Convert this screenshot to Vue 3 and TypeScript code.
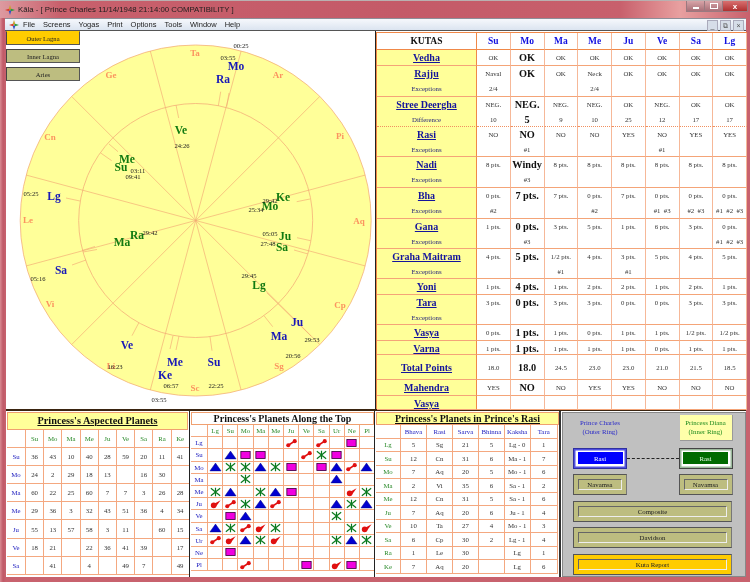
<script setup lang="ts">
const menus = ['File', 'Screens', 'Yogas', 'Print', 'Options', 'Tools', 'Window', 'Help']

const cx = 195.7
const cy = 220.5
const spokes = Array.from({ length: 12 }, (_, i) => {
  const a = ((15 + 30 * i) * Math.PI) / 180
  return { x: cx + 175.5 * Math.sin(a), y: cy - 175.5 * Math.cos(a) }
})

const signs = [
  ['Ta', 195, 53], ['Ar', 278, 75], ['Pi', 340, 136], ['Aq', 359, 221], ['Cp', 340, 305], ['Sg', 279, 366],
  ['Sc', 195, 388], ['Li', 111, 366], ['Vi', 50, 304], ['Le', 28, 220], ['Cn', 50, 137], ['Ge', 111, 75],
] as const

const outerPlanets = [
  ['Mo', 236, 66], ['Ra', 223, 79], ['Lg', 54, 196], ['Sa', 61, 270], ['Ve', 127, 345],
  ['Me', 175, 362], ['Ke', 165, 375], ['Su', 214, 362], ['Ma', 279, 336], ['Ju', 297, 322],
] as const

const innerPlanets = [
  ['Ve', 181, 130], ['Me', 127, 159], ['Su', 121, 167], ['Ke', 283, 197], ['Mo', 270, 206],
  ['Ju', 285, 236], ['Sa', 282, 247], ['Ra', 137, 235], ['Ma', 122, 242], ['Lg', 259, 285],
] as const

const times = [
  ['00:25', 241, 45], ['03:55', 228, 57], ['24:26', 182, 145], ['03:11', 138, 170], ['09:41', 133, 176],
  ['05:25', 31, 193], ['29:42', 150, 232], ['29:42', 270, 200], ['25:34', 256, 209], ['05:05', 270, 233],
  ['27:48', 268, 243], ['29:45', 249, 275], ['05:16', 38, 278], ['29:53', 312, 339], ['20:56', 293, 355],
  ['16:23', 115, 366], ['06:57', 171, 385], ['22:25', 216, 385], ['03:55', 159, 399],
] as const

const ticks = [
  [220.7, 91.7, 218.3, 106], [229, 93, 226.7, 106.7], [176, 105, 178.7, 118], [109, 144, 118, 151.7],
  [100.7, 153, 111.7, 160.7], [66, 198, 80, 201], [296.7, 201.7, 310, 199], [297, 237.7, 310.7, 240.7],
  [294, 250, 308, 254], [82, 250.5, 95, 246.5], [83, 252, 97, 249.5], [72, 265, 86, 260],
  [132, 335.7, 138.7, 323], [170, 349, 173, 335.7], [176, 350, 179, 336], [212, 350.7, 210, 336.7],
  [272.7, 326.7, 264, 315.7], [266.7, 292.7, 311, 336],
]

const kutaHeads = ['Su', 'Mo', 'Ma', 'Me', 'Ju', 'Ve', 'Sa', 'Lg']

interface KutaRow {
  name: string
  sub?: string
  h: number
  cells: string[]
  center?: boolean
  dotted?: boolean
}

const pts = (v: string) =>
  v.split(',').map((s) => {
    const [a, b] = s.split('/')
    return (a ? a + ' pts.' : '') + (b ? '|' + b.replace(/_/g, '  ') : '')
  })

const kutas: KutaRow[] = [
  { name: 'Vedha', h: 16, cells: Array(8).fill('OK') },
  { name: 'Rajju', sub: 'Exceptions', h: 30.5, cells: ['Naval|2/4', 'OK', 'OK', 'Neck|2/4', 'OK', 'OK', 'OK', 'OK'] },
  { name: 'Stree Deergha', sub: 'Difference', h: 30.5, dotted: true, cells: ['NEG.|10', 'NEG.|5', 'NEG.|9', 'NEG.|10', 'OK|25', 'NEG.|12', 'OK|17', 'OK|17'] },
  { name: 'Rasi', sub: 'Exceptions', h: 30, cells: ['NO', 'NO|#1', 'NO', 'NO', 'YES', 'NO|#1', 'YES', 'YES'] },
  { name: 'Nadi', sub: 'Exceptions', h: 30.5, cells: ['8 pts.', 'Windy|#3', '8 pts.', '8 pts.', '8 pts.', '8 pts.', '8 pts.', '8 pts.'] },
  { name: 'Bha', sub: 'Exceptions', h: 31, cells: pts('0/#2,7,7,0/#2,7,0/#1_#3,0/#2_#3,0/#1_#2_#3') },
  { name: 'Gana', sub: 'Exceptions', h: 30.5, cells: pts('1,0/#3,3,5,1,6,3,0/#1_#2_#3') },
  { name: 'Graha Maitram', sub: 'Exceptions', h: 30, cells: ['4 pts.', '5 pts.', '1/2 pts.|#1', '4 pts.', '3 pts.|#1', '5 pts.', '4 pts.', '5 pts.'] },
  { name: 'Yoni', h: 15.5, cells: pts('1,4,1,2,2,1,2,1') },
  { name: 'Tara', sub: 'Exceptions', h: 30.5, cells: pts('3,0,3,3,0,0,3,3') },
  { name: 'Vasya', h: 15.5, cells: ['0 pts.', '1 pts.', '1 pts.', '0 pts.', '1 pts.', '1 pts.', '1/2 pts.', '1/2 pts.'] },
  { name: 'Varna', h: 14.5, cells: pts('1,1,1,1,1,0,1,1') },
  { name: 'Total Points', h: 25, center: true, cells: ['18.0', '18.0', '24.5', '23.0', '23.0', '21.0', '21.5', '18.5'] },
  { name: 'Mahendra', h: 16, cells: ['YES', 'NO', 'NO', 'YES', 'YES', 'NO', 'NO', 'NO'] },
  { name: 'Vasya', h: 13.5, cells: Array(8).fill('') },
]
const kutaRowsTemplate = '17px ' + kutas.map((k) => k.h + 'px').join(' ')

const aspHeads = ['Su', 'Mo', 'Ma', 'Me', 'Ju', 'Ve', 'Sa', 'Ra', 'Ke']
const aspRows: [string, string[]][] = [
  ['Su', '36 43 10 40 28 59 20 11 41'.split(' ')],
  ['Mo', ['24', '2', '29', '18', '13', '', '16', '30', '']],
  ['Ma', '60 22 25 60 7 7 3 26 28'.split(' ')],
  ['Me', '29 36 3 32 43 51 36 4 34'.split(' ')],
  ['Ju', ['55', '13', '57', '58', '3', '11', '', '60', '15']],
  ['Ve', ['18', '21', '', '22', '36', '41', '39', '', '17']],
  ['Sa', ['', '41', '', '4', '', '49', '7', '', '49']],
]

const topHeads = ['Lg', 'Su', 'Mo', 'Ma', 'Me', 'Ju', 'Ve', 'Sa', 'Ur', 'Ne', 'Pl']
const topRows: [string, string][] = [
  ['Lg', '.....d.d.b.'],
  ['Su', '.Tbb..dXb..'],
  ['Mo', 'TXXTXb.bTdT'],
  ['Ma', '..X.....T..'],
  ['Me', 'XT.XTb...cX'],
  ['Ju', 'cdXTd...TXT'],
  ['Ve', '.bT.....X..'],
  ['Sa', 'TXdcX....Xc'],
  ['Ur', 'dcTXc...XTX'],
  ['Ne', '.b.........'],
  ['Pl', '..d...b.cb.'],
]

const rasiHeads = ['Bhava', 'Rasi', 'Sarva', 'Bhinna', 'Kaksha', 'Tara']
const rasiRows: string[][] = [
  ['Lg', '5', 'Sg', '21', '5', 'Lg - 0', '1'],
  ['Su', '12', 'Cn', '31', '6', 'Ma - 1', '7'],
  ['Mo', '7', 'Aq', '20', '5', 'Mo - 1', '6'],
  ['Ma', '2', 'Vi', '35', '6', 'Sa - 1', '2'],
  ['Me', '12', 'Cn', '31', '5', 'Sa - 1', '6'],
  ['Ju', '7', 'Aq', '20', '6', 'Ju - 1', '4'],
  ['Ve', '10', 'Ta', '27', '4', 'Mo - 1', '3'],
  ['Sa', '6', 'Cp', '30', '2', 'Lg - 1', '4'],
  ['Ra', '1', 'Le', '30', '', 'Lg', '1'],
  ['Ke', '7', 'Aq', '20', '', 'Lg', '6'],
]
</script>

<template>
  <div class="window">
    <header class="titlebar">
      <svg class="logo" viewBox="0 0 12 12">
        <path d="M6 0 7.4 4.6 6 6 4.6 4.6Z" fill="#c9a227" />
        <path d="M12 6 7.4 7.4 6 6 7.4 4.6Z" fill="#2e9a3c" />
        <path d="M6 12 4.6 7.4 6 6 7.4 7.4Z" fill="#3050c8" />
        <path d="M0 6 4.6 4.6 6 6 4.6 7.4Z" fill="#d8402c" />
      </svg>
      <span class="title-text">Kāla - [ Prince Charles  11/14/1948  21:14:00     COMPATIBILITY ]</span>
      <div class="caption">
        <span class="cap-btn"><i class="min"></i></span>
        <span class="cap-btn"><i class="max"></i></span>
        <span class="cap-btn close">x</span>
      </div>
    </header>

    <nav class="menubar">
      <svg class="logo menu-logo" viewBox="0 0 12 12">
        <path d="M6 0 7.4 4.6 6 6 4.6 4.6Z" fill="#c9a227" />
        <path d="M12 6 7.4 7.4 6 6 7.4 4.6Z" fill="#2e9a3c" />
        <path d="M6 12 4.6 7.4 6 6 7.4 7.4Z" fill="#3050c8" />
        <path d="M0 6 4.6 4.6 6 6 4.6 7.4Z" fill="#d8402c" />
      </svg>
      <span v-for="m in menus" :key="m">{{ m }}</span>
      <div class="child-btns">
        <span>_</span>
        <span>&#10697;</span>
        <span>×</span>
      </div>
    </nav>

    <main class="body">
      <section class="upper">
        <div class="chart">
          <div class="chart-btns">
            <button class="lagna on">Outer Lagna</button>
            <button class="lagna">Inner Lagna</button>
            <button class="lagna">Aries</button>
          </div>
          <svg class="wheel" viewBox="6 31 369 378">
            <circle :cx="cx" :cy="cy" r="175.5" class="ring" />
            <circle :cx="cx" :cy="cy" r="117" class="ring" />
            <line v-for="(s, i) in spokes" :key="'s' + i" :x1="cx" :y1="cy" :x2="s.x" :y2="s.y" class="spoke" />
            <line v-for="(t, i) in ticks" :key="'t' + i" :x1="t[0]" :y1="t[1]" :x2="t[2]" :y2="t[3]" class="spoke" />
            <text v-for="s in signs" :key="s[0]" :x="s[1]" :y="s[2]" class="sign">{{ s[0] }}</text>
            <text v-for="p in outerPlanets" :key="'o' + p[0]" :x="p[1]" :y="p[2]" class="planet outer">{{ p[0] }}</text>
            <text v-for="p in innerPlanets" :key="'n' + p[0]" :x="p[1]" :y="p[2]" class="planet in">{{ p[0] }}</text>
            <text v-for="(t, i) in times" :key="'d' + i" :x="t[1]" :y="t[2]" class="time">{{ t[0] }}</text>
          </svg>
        </div>

        <div class="kutas" :style="{ gridTemplateRows: kutaRowsTemplate }">
          <div class="kc head-k">KUTAS</div>
          <div v-for="h in kutaHeads" :key="h" class="kc head-p">{{ h }}</div>
          <template v-for="k in kutas" :key="k.name + k.h">
            <div class="kc kname" :class="{ dotted: k.dotted, center: k.center }">
              <span class="kt">{{ k.name }}</span>
              <span v-if="k.sub" class="ks">{{ k.sub }}</span>
            </div>
            <div
              v-for="(c, i) in k.cells"
              :key="i"
              class="kc kval"
              :class="{ dotted: k.dotted, center: k.center, big: i === 1, s5: c === 'NEG.|5' }"
            >
              <span class="l1">{{ c.split('|')[0] }}</span>
              <span v-if="c.includes('|')" class="l2">{{ c.split('|')[1] }}</span>
            </div>
          </template>
        </div>
      </section>

      <section class="lower">
        <div class="panel asp">
          <h3 class="ptitle yellow">Princess's Aspected Planets</h3>
          <div class="asp-grid">
            <div class="c"></div>
            <div v-for="h in aspHeads" :key="h" class="c green">{{ h }}</div>
            <template v-for="r in aspRows" :key="r[0]">
              <div class="c blue">{{ r[0] }}</div>
              <div v-for="(v, i) in r[1]" :key="i" class="c">{{ v }}</div>
            </template>
          </div>
        </div>

        <div class="panel top">
          <h3 class="ptitle">Princess's Planets Along the Top</h3>
          <div class="top-grid">
            <div class="c"></div>
            <div v-for="h in topHeads" :key="h" class="c green">{{ h }}</div>
            <template v-for="r in topRows" :key="r[0]">
              <div class="c blue">{{ r[0] }}</div>
              <div v-for="(g, i) in r[1].split('')" :key="i" class="c">
                <svg v-if="g === 'T'" class="ic" viewBox="0 0 14 10"><path d="M7 .8 13 9.2H1Z" fill="#0000d0" stroke="#000080" stroke-width=".5" /></svg>
                <svg v-else-if="g === 'X'" class="ic" viewBox="0 0 14 10"><path d="M2 1 12 9M12 1 2 9M7 .5V9.5" stroke="#0a7a1e" stroke-width="1.3" fill="none" /></svg>
                <svg v-else-if="g === 'b'" class="ic" viewBox="0 0 14 10"><rect x="2" y="1.2" width="10" height="7.6" fill="#f000e0" stroke="#400040" stroke-width=".9" /></svg>
                <svg v-else-if="g === 'd'" class="ic" viewBox="0 0 14 10"><path d="M3.5 7.5 10.5 3" stroke="#e01010" stroke-width="1.8" /><circle cx="3.5" cy="7.5" r="2.2" fill="#e01010" /><circle cx="10.5" cy="3" r="2.2" fill="#e01010" /></svg>
                <svg v-else-if="g === 'c'" class="ic" viewBox="0 0 14 10"><path d="M5 5 12.5 1 7 8.5Z" fill="#e01010" /><circle cx="5" cy="6.5" r="3" fill="#e01010" /></svg>
              </div>
            </template>
          </div>
        </div>

        <div class="panel rasi">
          <h3 class="ptitle yellow">Princess's Planets in Prince's Rasi</h3>
          <div class="rasi-grid">
            <div class="c"></div>
            <div v-for="h in rasiHeads" :key="h" class="c blue">{{ h }}</div>
            <template v-for="r in rasiRows" :key="r[0]">
              <div v-for="(v, i) in r" :key="i" class="c" :class="{ green: i === 0 }">{{ v }}</div>
            </template>
          </div>
        </div>

        <div class="controls">
          <div class="names">
            <div class="prince">Prince Charles<br />(Outer Ring)</div>
            <div class="princess">Princess Diana<br />(Inner Ring)</div>
          </div>
          <div class="ctl-row link">
            <button class="cbtn blue-btn"><span>Rasi</span></button>
            <i class="dash"></i>
            <button class="cbtn green-btn"><span>Rasi</span></button>
          </div>
          <div class="ctl-row">
            <button class="cbtn"><span>Navamsa</span></button>
            <i class="space"></i>
            <button class="cbtn"><span>Navamsa</span></button>
          </div>
          <button class="cbtn wide"><span>Composite</span></button>
          <button class="cbtn wide"><span>Davidson</span></button>
          <button class="cbtn wide gold"><span>Kuta Report</span></button>
        </div>
      </section>
    </main>
  </div>
</template>

<style>
html,
body {
  margin: 0;
  background: #c8626e;
}
</style>

<style scoped>
.window {
  width: 750px;
  height: 582px;
  display: flex;
  flex-direction: column;
  overflow: hidden;
  font-family: "Liberation Serif", serif;
  background: linear-gradient(90deg, #d98a92 0, #c05a68 3px, #c8626e 6px);
  filter: blur(0.25px);
}
.titlebar {
  height: 18px;
  flex: none;
  display: flex;
  align-items: center;
  padding-left: 5px;
  box-sizing: border-box;
  border-top: 1px solid #b9b0b0;
  background: linear-gradient(90deg, #dd9aa0 0, #c8606c 60px, #c45a68 400px, #c8606c 620px, #e8a0a0 680px, #c8606c 750px);
  font: 7.8px "Liberation Sans", sans-serif;
  color: #1d1d1d;
  position: relative;
}
.logo {
  width: 10px;
  height: 10px;
  flex: none;
}
.title-text {
  margin-left: 3px;
  white-space: pre;
}
.caption {
  position: absolute;
  right: 2px;
  top: 0;
  height: 11px;
  display: flex;
}
.cap-btn {
  width: 17px;
  height: 10px;
  border: 1px solid #9a7a80;
  border-top: 0;
  background: linear-gradient(#d8a4a8, #a87078);
  display: flex;
  align-items: center;
  justify-content: center;
  color: #fff;
  font: bold 8px "Liberation Sans", sans-serif;
  margin-left: -1px;
}
.cap-btn.close {
  width: 24px;
  background: linear-gradient(#d87070, #b03030);
}
.min {
  width: 6px;
  height: 2px;
  background: #fff;
  margin-top: 3px;
}
.max {
  width: 6px;
  height: 4px;
  border: 1px solid #fff;
}
.menubar {
  height: 13px;
  flex: none;
  margin: 0 4px 0 5px;
  display: flex;
  align-items: center;
  gap: 8px;
  box-sizing: border-box;
  padding-left: 4px;
  background: linear-gradient(#f6f8fc, #dbe4f0);
  border-top: 1px solid #8e8e98;
  border-bottom: 1px solid #555;
  font: 7.5px "Liberation Sans", sans-serif;
  color: #222;
  position: relative;
}
.menu-logo {
  margin-right: -4px;
}
.child-btns {
  position: absolute;
  right: 2px;
  top: 1px;
  display: flex;
  gap: 2px;
}
.child-btns span {
  width: 9px;
  height: 9px;
  background: #d6dde8;
  border: 1px solid #aab;
  color: #555;
  font-size: 7px;
  line-height: 9px;
  text-align: center;
}
.body {
  flex: 1;
  margin: 0 4.5px 5px 6px;
  display: flex;
  flex-direction: column;
  background: #fff;
  min-height: 0;
}
.upper {
  height: 378px;
  flex: none;
  display: flex;
  border-bottom: 2px solid #3a2410;
}
.chart {
  width: 369px;
  flex: none;
  position: relative;
  background: #fff;
  border-right: 1px solid #222;
}
.wheel {
  display: block;
  width: 369px;
  height: 378px;
}
.chart-btns {
  position: absolute;
  left: 0;
  top: 0;
  display: flex;
  flex-direction: column;
  gap: 4px;
  z-index: 1;
}
.lagna {
  width: 74px;
  height: 14px;
  padding: 0;
  font: 6.6px "Liberation Serif", serif;
  color: #222;
  background: #bdbd80;
  border: 1px solid;
  border-color: #444 #555 #555 #444;
  box-sizing: border-box;
}
.lagna.on {
  background: #ffcc00;
  border-top-color: #ffcc00;
}
.ring {
  fill: #ffff99;
  stroke: #f4b078;
  stroke-width: 0.8;
}
.spoke {
  stroke: #f3a974;
  stroke-width: 0.65;
}
.sign,
.planet,
.time {
  text-anchor: middle;
  dominant-baseline: central;
  font-family: "Liberation Serif", serif;
}
.sign {
  font-size: 9px;
  font-weight: 700;
  fill: #fb9460;
}
.planet {
  font-size: 11.5px;
  font-weight: 700;
}
.planet.outer {
  fill: #1818b8;
}
.planet.in {
  fill: #117a11;
}
.time {
  font-size: 6.6px;
  fill: #222;
}
.kutas {
  flex: 1;
  display: grid;
  grid-template-columns: 100px repeat(8, 33.75px);
  align-content: start;
  margin-top: 1px;
  border: solid #f08848;
  border-width: 1px 0 0 1px;
  box-sizing: border-box;
}
.kc {
  border-right: 1px solid #f6b898;
  border-bottom: 1px solid #f4a478;
  box-sizing: border-box;
  display: flex;
  flex-direction: column;
  align-items: center;
  overflow: hidden;
  background: #fff;
}
.kc.dotted {
  border-bottom: 1px dotted #f09060;
}
.kc.center {
  justify-content: center;
}
.head-k,
.head-p {
  justify-content: center;
  border-bottom: 1.5px solid #f08848;
  font-size: 9.5px;
  font-weight: 700;
}
.head-k {
  color: #111;
  border-right: 1.5px solid #f08848;
}
.head-p {
  color: #1010e0;
}
.kname {
  background: #ffff99;
  border-right: 1.5px solid #f08848;
}
.kt {
  height: 15.2px;
  line-height: 15px;
  font-size: 10px;
  font-weight: 700;
  color: #14149c;
  text-decoration: underline;
  white-space: nowrap;
}
.center .kt {
  height: auto;
}
.ks {
  height: 15px;
  line-height: 15px;
  font-size: 6.8px;
  color: #24247c;
}
.kval {
  font-size: 6.8px;
  color: #333;
}
.l1,
.l2 {
  height: 15.2px;
  line-height: 15px;
  white-space: pre;
}
.center .l1 {
  height: auto;
}
.big .l1 {
  font-size: 10.3px;
  font-weight: 700;
  color: #111;
}
.s5 .l2 {
  font-size: 10.3px;
  font-weight: 700;
  color: #111;
}
.lower {
  flex: 1;
  display: flex;
  min-height: 0;
  background: #fff;
}
.panel {
  flex: none;
  box-sizing: border-box;
  overflow: hidden;
  padding-top: 1px;
}
.asp {
  width: 184px;
  border-right: 1px solid #222;
  padding-left: 1px;
  padding-right: 1px;
}
.top {
  width: 185px;
  border-right: 1.5px solid #222;
  padding-left: 1px;
}
.rasi {
  width: 186px;
  border-right: 2px solid #333;
  padding-left: 1px;
}
.ptitle {
  margin: 0;
  height: 13px;
  line-height: 12px;
  font-size: 10px;
  font-weight: 700;
  text-align: center;
  text-decoration: underline;
  color: #111;
  background: #fff;
  border: 1px solid #f0a070;
  box-sizing: border-box;
  white-space: nowrap;
}
.ptitle.yellow {
  background: #ffff99;
}
.asp .ptitle {
  height: 18px;
  line-height: 16px;
  font-size: 10.3px;
}
.top .ptitle {
  text-decoration: none;
}
.c {
  border-right: 1px solid #f4a880;
  border-bottom: 1px solid #f4a880;
  box-sizing: border-box;
  display: flex;
  align-items: center;
  justify-content: center;
  font-size: 6.8px;
  color: #333;
  overflow: hidden;
  white-space: nowrap;
}
.c.green {
  color: #2a8a2a;
}
.c.blue {
  color: #2222c0;
}
.asp-grid {
  display: grid;
  grid-template-columns: 19px repeat(9, 18.2px);
  grid-template-rows: repeat(8, 18.1px);
}
.top-grid {
  display: grid;
  grid-template-columns: 17px repeat(11, 15.2px);
  grid-template-rows: repeat(12, 12.2px);
}
.rasi-grid {
  display: grid;
  grid-template-columns: 25px 26px 26px 26px 25.7px 26px 27px;
  grid-template-rows: repeat(11, 13.5px);
}
.ic {
  width: 13px;
  height: 10px;
  display: block;
}
.controls {
  flex: 1;
  background: #c0c0c0;
  border: 1px solid #888;
  box-sizing: border-box;
  padding: 2px 12px 0 10px;
  display: flex;
  flex-direction: column;
  gap: 5.5px;
  margin: 1px 0 0 1px;
}
.names {
  height: 26px;
  display: flex;
  justify-content: space-between;
  font-size: 6.8px;
  line-height: 9px;
  text-align: center;
  margin-bottom: 1px;
}
.prince {
  width: 54px;
  padding-top: 3px;
  color: #2a2ac8;
}
.princess {
  width: 53px;
  height: 26px;
  padding-top: 3px;
  box-sizing: border-box;
  background: #ffffaa;
  color: #1e8a1e;
  border-right: 1px solid #999;
  border-bottom: 1px solid #999;
}
.ctl-row {
  display: flex;
  align-items: center;
}
.ctl-row .cbtn {
  width: 54px;
  flex: none;
}
.dash {
  flex: 1;
  border-top: 1px dashed #222;
}
.space {
  flex: 1;
}
.cbtn {
  height: 21px;
  padding: 4px;
  box-sizing: border-box;
  background: #bdbd80;
  border: 1px solid #555;
  border-right-color: #777;
  display: block;
}
.cbtn span {
  display: flex;
  align-items: center;
  justify-content: center;
  height: 100%;
  box-sizing: border-box;
  border: 1px solid;
  border-color: #666 #eee #eee #666;
  font: 6.8px "Liberation Serif", serif;
  color: #222;
}
.wide {
  width: 159px;
}
.gold {
  background: #ffcc00;
}
.blue-btn {
  background: #fff;
  border-color: #3030a0;
  padding: 2px;
  box-shadow: inset 0 0 0 1.5px #5050e0;
}
.blue-btn span {
  background: #0000ff;
  color: #fff;
  border: 0;
  margin: 1.5px;
  height: calc(100% - 3px);
}
.green-btn {
  background: #fff;
  border-color: #444;
  padding: 2px;
  box-shadow: inset 0 0 0 1.5px #9ab89a;
}
.green-btn span {
  background: #006a00;
  color: #e8ffe8;
  border: 0;
  margin: 1.5px;
  height: calc(100% - 3px);
}
</style>
